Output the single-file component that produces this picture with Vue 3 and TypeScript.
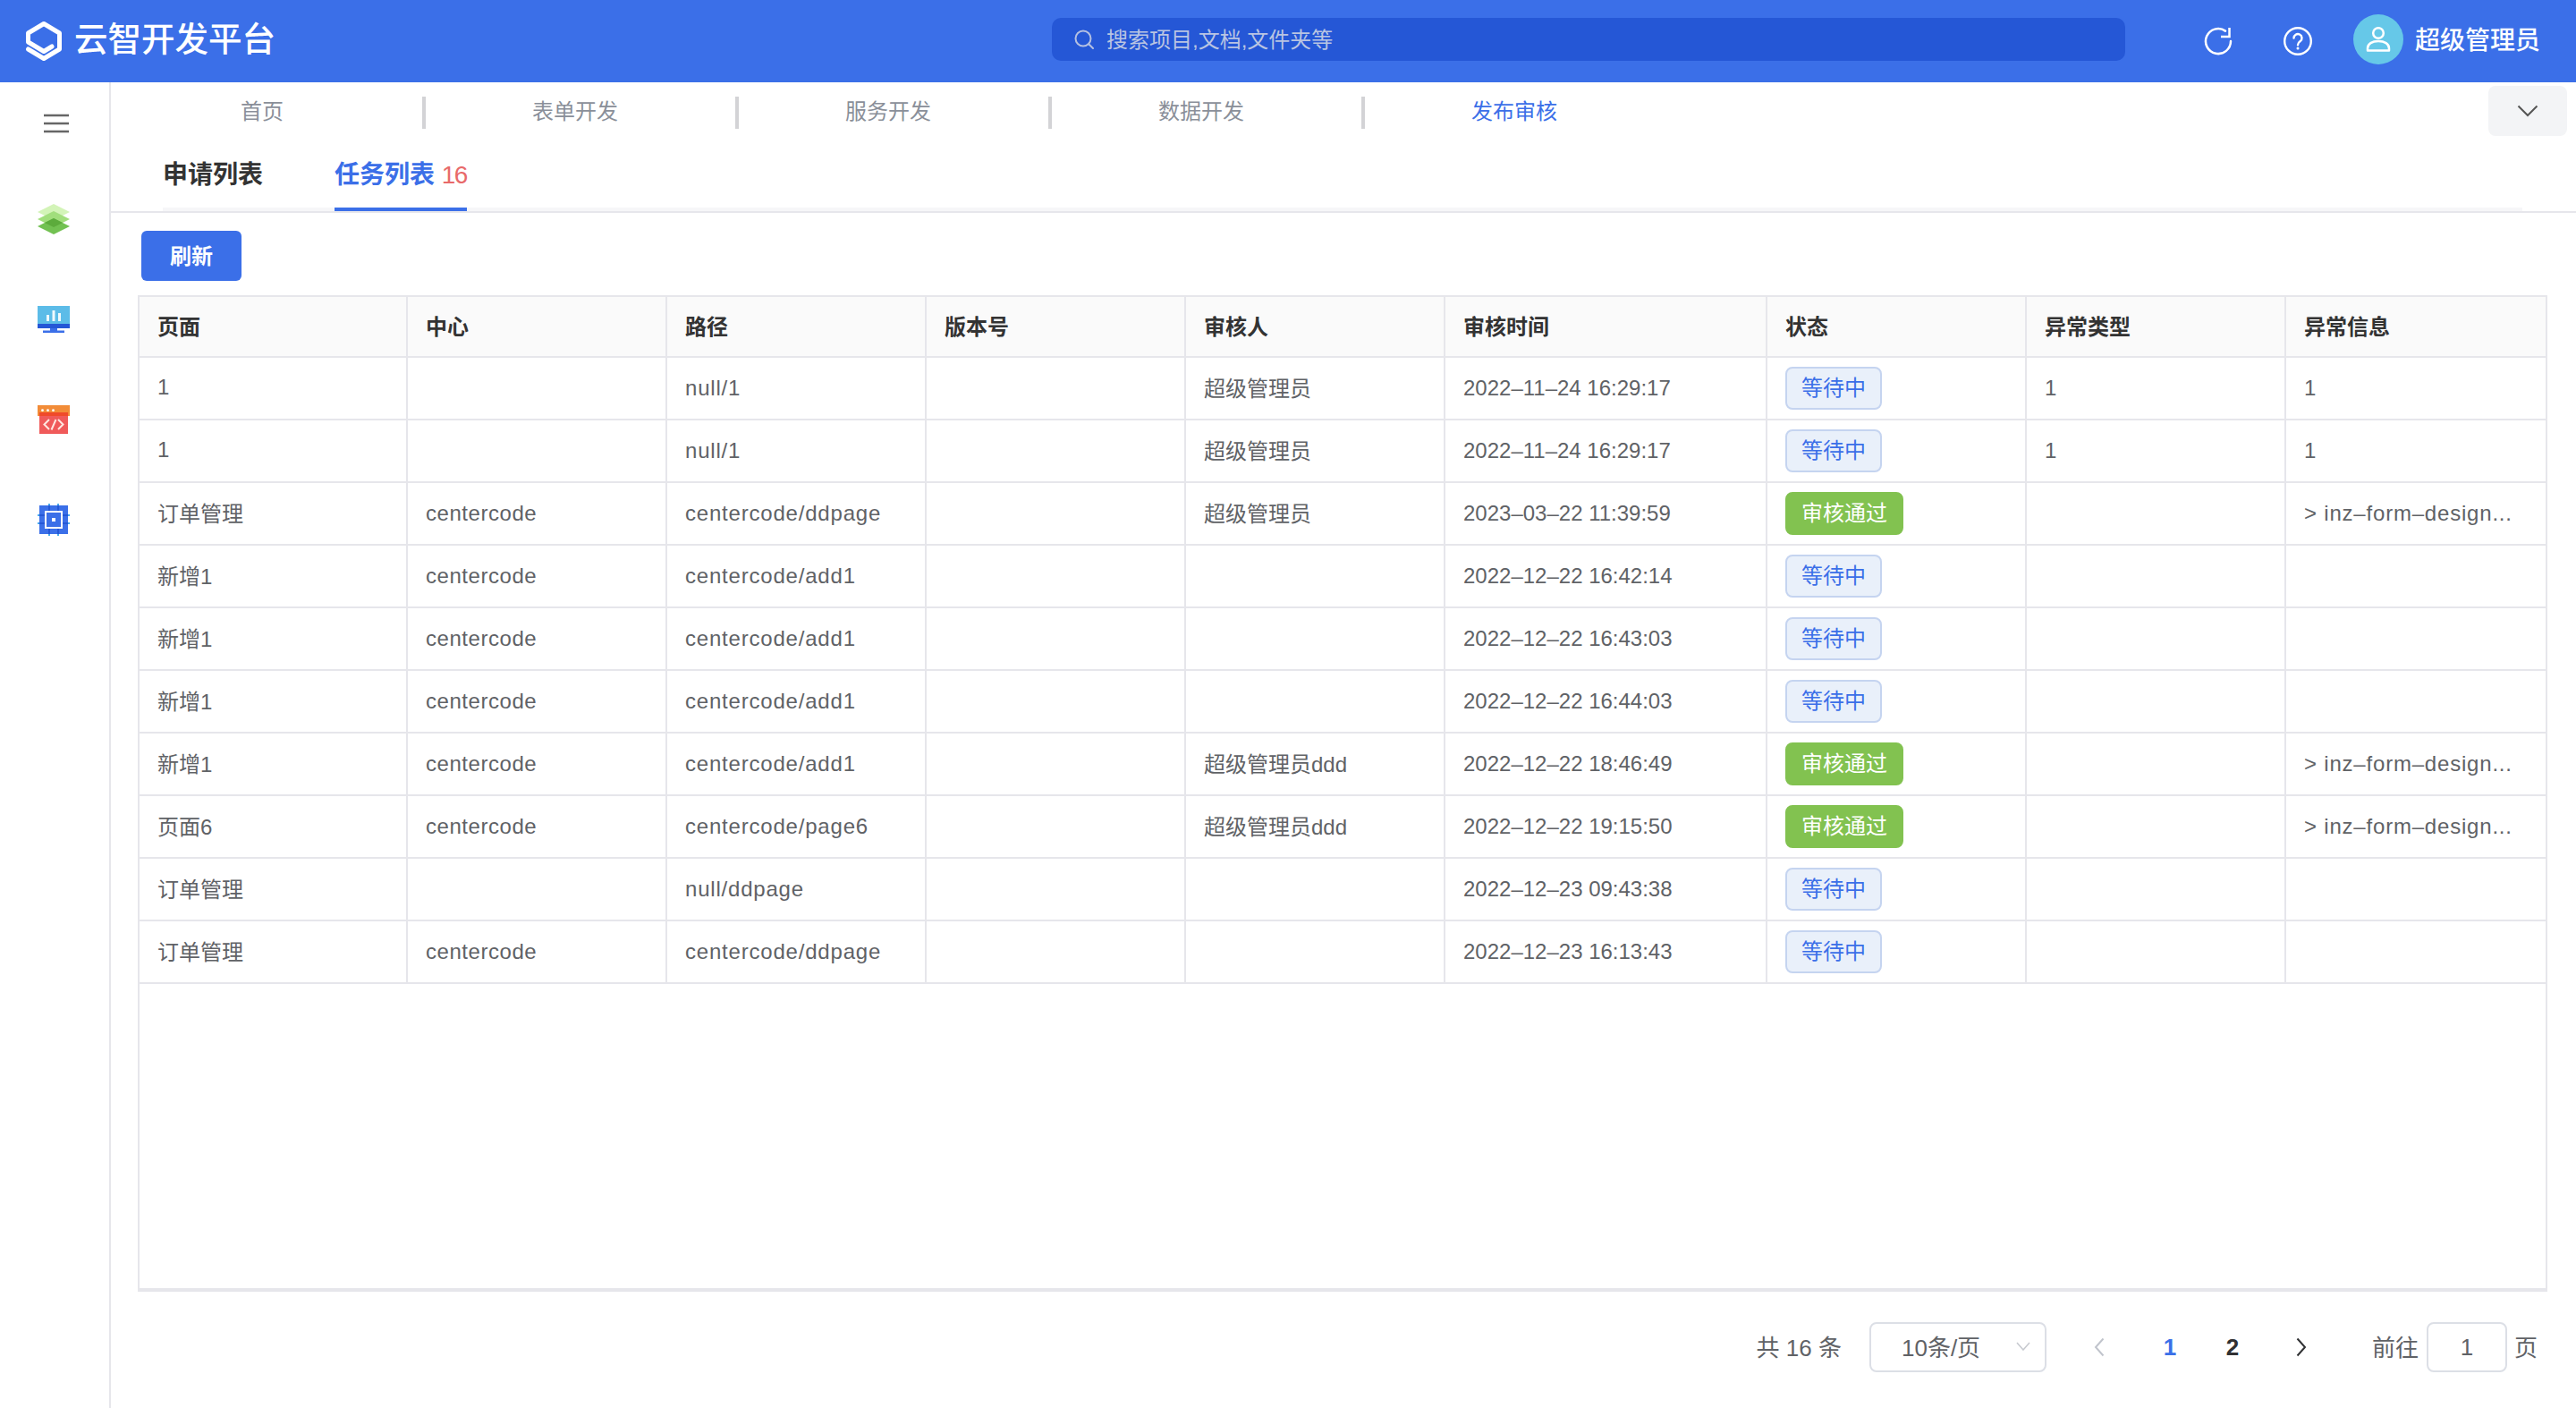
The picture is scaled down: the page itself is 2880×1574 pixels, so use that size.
<script setup lang="ts">
interface Row {
  page: string
  center: string
  path: string
  version: string
  reviewer: string
  time: string
  passed: boolean
  errType: string
  errInfo: string
}

const navItems = ['首页', '表单开发', '服务开发', '数据开发', '发布审核']
const columns = ['页面', '中心', '路径', '版本号', '审核人', '审核时间', '状态', '异常类型', '异常信息']
const errText = '> inz–form–design...'

const rows: Row[] = [
  { page: '1', center: '', path: 'null/1', version: '', reviewer: '超级管理员', time: '2022–11–24 16:29:17', passed: false, errType: '1', errInfo: '1' },
  { page: '1', center: '', path: 'null/1', version: '', reviewer: '超级管理员', time: '2022–11–24 16:29:17', passed: false, errType: '1', errInfo: '1' },
  { page: '订单管理', center: 'centercode', path: 'centercode/ddpage', version: '', reviewer: '超级管理员', time: '2023–03–22 11:39:59', passed: true, errType: '', errInfo: errText },
  { page: '新增1', center: 'centercode', path: 'centercode/add1', version: '', reviewer: '', time: '2022–12–22 16:42:14', passed: false, errType: '', errInfo: '' },
  { page: '新增1', center: 'centercode', path: 'centercode/add1', version: '', reviewer: '', time: '2022–12–22 16:43:03', passed: false, errType: '', errInfo: '' },
  { page: '新增1', center: 'centercode', path: 'centercode/add1', version: '', reviewer: '', time: '2022–12–22 16:44:03', passed: false, errType: '', errInfo: '' },
  { page: '新增1', center: 'centercode', path: 'centercode/add1', version: '', reviewer: '超级管理员ddd', time: '2022–12–22 18:46:49', passed: true, errType: '', errInfo: errText },
  { page: '页面6', center: 'centercode', path: 'centercode/page6', version: '', reviewer: '超级管理员ddd', time: '2022–12–22 19:15:50', passed: true, errType: '', errInfo: errText },
  { page: '订单管理', center: '', path: 'null/ddpage', version: '', reviewer: '', time: '2022–12–23 09:43:38', passed: false, errType: '', errInfo: '' },
  { page: '订单管理', center: 'centercode', path: 'centercode/ddpage', version: '', reviewer: '', time: '2022–12–23 16:13:43', passed: false, errType: '', errInfo: '' },
]
</script>

<template>
  <div class="app">
    <header class="topbar">
      <div class="brand">
        <svg class="brand-logo" width="40" height="44" viewBox="0 0 40 44" fill="none">
          <path d="M2.5 31 L20 41.5 L37.5 31 V13 L20 2.5 L2.5 13 V23 L20 33.5 L29 28" stroke="#fff" stroke-width="5" stroke-linecap="round" stroke-linejoin="round"/>
        </svg>
        <span class="brand-name">云智开发平台</span>
      </div>
      <div class="search">
        <svg width="22" height="22" viewBox="0 0 22 22" fill="none">
          <circle cx="10" cy="10" r="8.5" stroke="#b4c0e2" stroke-width="2"/>
          <path d="M16.5 16.5 L21 21" stroke="#b4c0e2" stroke-width="2" stroke-linecap="round"/>
        </svg>
        <span class="search-text">搜索项目,文档,文件夹等</span>
      </div>
      <div class="top-actions">
        <svg width="32" height="32" viewBox="0 0 32 32" fill="none">
          <path d="M24 4.6 A14 14 0 1 0 30 16" stroke="#fff" stroke-width="2.5" stroke-linecap="round"/>
          <path d="M28.5 1 V11 H19" stroke="#fff" stroke-width="2.5"/>
        </svg>
        <svg class="help" width="32" height="32" viewBox="0 0 32 32" fill="none">
          <circle cx="16" cy="16" r="14.8" stroke="#fff" stroke-width="2.4"/>
          <path d="M11.5 12.5 a4.5 4.5 0 1 1 7.2 3.6 c-1.7 1.2 -2.7 2.2 -2.7 4.2" stroke="#fff" stroke-width="2.4" stroke-linecap="round"/>
          <circle cx="16" cy="24" r="1.5" fill="#fff"/>
        </svg>
        <div class="avatar">
          <svg width="28" height="28" viewBox="0 0 28 28" fill="none">
            <circle cx="14" cy="7" r="5.8" stroke="#fff" stroke-width="2.5"/>
            <path d="M2 26.5 V24 C2 19 7 16 14 16 S26 19 26 24 V26.5 Z" stroke="#fff" stroke-width="2.5" stroke-linejoin="round"/>
          </svg>
        </div>
        <span class="user-name">超级管理员</span>
      </div>
    </header>

    <div class="body">
      <aside class="sidebar">
        <button class="menu-btn">
          <svg width="28" height="22" viewBox="0 0 28 22" fill="none">
            <path d="M0 2 H28 M0 11 H28 M0 20 H28" stroke="#666" stroke-width="2.4"/>
          </svg>
        </button>
        <div class="side-item">
          <svg width="36" height="34" viewBox="0 0 36 34">
            <polygon points="18,0 36,9 18,18 0,9" fill="#d3f4b8"/>
            <polygon points="18,8 36,17 18,26 0,17" fill="#a1de7c"/>
            <polygon points="18,16 36,25 18,34 0,25" fill="#72c152"/>
            <polygon points="18,16 28,21 18,26 8,21" fill="#5cab3c"/>
          </svg>
        </div>
        <div class="side-item">
          <svg width="36" height="30" viewBox="0 0 36 30">
            <rect x="0" y="0" width="36" height="20" fill="#5cbce8"/>
            <rect x="0" y="20" width="36" height="5" fill="#2557d6"/>
            <rect x="14" y="25" width="8" height="3" fill="#3b6fe8"/>
            <rect x="6" y="27.5" width="24" height="2.5" fill="#3b6fe8"/>
            <rect x="10" y="10" width="3" height="7" fill="#fff" opacity=".9"/>
            <rect x="16.5" y="5" width="3" height="12" fill="#fff" opacity=".9"/>
            <rect x="23" y="8" width="3" height="9" fill="#fff" opacity=".9"/>
          </svg>
        </div>
        <div class="side-item">
          <svg width="36" height="32" viewBox="0 0 36 32" fill="none">
            <rect x="0" y="0" width="36" height="12" fill="#f28c38"/>
            <rect x="2" y="8" width="32" height="24" fill="#f05a5a"/>
            <rect x="2" y="8" width="32" height="4" fill="#f04a2a"/>
            <circle cx="5.5" cy="5.7" r="1.4" fill="#fff"/>
            <circle cx="11.5" cy="5.7" r="1.4" fill="#fff"/>
            <circle cx="17.5" cy="5.7" r="1.4" fill="#fff"/>
            <path d="M13 16 L7.5 21.5 L13 27 M23 16 L28.5 21.5 L23 27 M20.5 16 L15.5 27.5" stroke="#ffe6e0" stroke-width="2"/>
          </svg>
        </div>
        <div class="side-item">
          <svg width="36" height="36" viewBox="0 0 36 36" fill="none">
            <path d="M13 0 V36 M23 0 V36 M0 13 H36 M0 22 H36" stroke="#47a9ef" stroke-width="2"/>
            <rect x="2" y="2" width="32" height="32" fill="#3b6fe8"/>
            <path d="M13 2 V8 M23 2 V8 M13 28 V34 M23 28 V34 M2 13 H8 M2 22 H8 M28 13 H34 M28 22 H34" stroke="#2557d6" stroke-width="2"/>
            <rect x="9" y="9" width="18" height="18" stroke="#fff" stroke-width="2"/>
            <rect x="16" y="16" width="4" height="4" fill="#fff"/>
          </svg>
        </div>
      </aside>

      <main class="content">
        <div class="nav-row">
          <div class="nav-items">
            <span
              v-for="(item, i) in navItems"
              :key="item"
              class="nav-item"
              :class="{ active: i === navItems.length - 1, last: i === navItems.length - 1 }"
            >{{ item }}</span>
          </div>
          <button class="nav-more">
            <svg width="24" height="14" viewBox="0 0 24 14" fill="none">
              <path d="M1.5 1.5 L12 12 L22.5 1.5" stroke="#555" stroke-width="2"/>
            </svg>
          </button>
        </div>

        <div class="subtabs-line">
          <div class="subtabs">
            <div class="subtab">申请列表</div>
            <div class="subtab current">任务列表 <span class="count">16</span></div>
          </div>
        </div>

        <div class="panel">
          <button class="refresh"><span>刷新</span></button>

          <div class="table-wrap">
            <table class="grid">
              <colgroup>
                <col v-for="(c, i) in columns" :key="c" :class="'col-' + i" />
              </colgroup>
              <thead>
                <tr>
                  <th v-for="c in columns" :key="c">{{ c }}</th>
                </tr>
              </thead>
              <tbody>
                <tr v-for="(r, i) in rows" :key="i">
                  <td class="cjk">{{ r.page }}</td>
                  <td class="latin">{{ r.center }}</td>
                  <td class="latin wide">{{ r.path }}</td>
                  <td>{{ r.version }}</td>
                  <td class="cjk">{{ r.reviewer }}</td>
                  <td>{{ r.time }}</td>
                  <td>
                    <span class="tag" :class="r.passed ? 'tag-ok' : 'tag-wait'">{{ r.passed ? '审核通过' : '等待中' }}</span>
                  </td>
                  <td>{{ r.errType }}</td>
                  <td class="latin wide">{{ r.errInfo }}</td>
                </tr>
              </tbody>
            </table>
          </div>

          <div class="pager">
            <span class="total">共 16 条</span>
            <div class="size-select">
              <span>10条/页</span>
              <svg width="16" height="10" viewBox="0 0 16 10" fill="none">
                <path d="M1 1 L8 9 L15 1" stroke="#c6c9cf" stroke-width="1.5"/>
              </svg>
            </div>
            <button class="page-btn prev">
              <svg width="12" height="22" viewBox="0 0 12 22" fill="none">
                <path d="M10.5 1.5 L2 11 L10.5 20.5" stroke="#c0c4cc" stroke-width="2"/>
              </svg>
            </button>
            <button class="page-btn num on">1</button>
            <button class="page-btn num">2</button>
            <button class="page-btn next">
              <svg width="12" height="22" viewBox="0 0 12 22" fill="none">
                <path d="M1.5 1.5 L10 11 L1.5 20.5" stroke="#303133" stroke-width="2"/>
              </svg>
            </button>
            <span class="goto">前往</span>
            <div class="goto-input">1</div>
            <span class="goto-end">页</span>
          </div>
        </div>
      </main>
    </div>
  </div>
</template>

<style>
html,
body {
  margin: 0;
  background: #fff;
}
</style>

<style scoped>
.app {
  width: 2880px;
  height: 1574px;
  display: flex;
  flex-direction: column;
  overflow: hidden;
  background: #fff;
  font-family: 'Liberation Sans', 'Noto Sans CJK SC', sans-serif;
  font-size: 24px;
  color: #606266;
}

button {
  border: none;
  padding: 0;
  font: inherit;
  background: none;
}

/* ---- Top bar ---- */
.topbar {
  flex: 0 0 92px;
  display: flex;
  align-items: center;
  padding: 0 40px 0 29px;
  background: #3b6fe8;
  color: #fff;
}

.brand {
  flex: 0 0 1147px;
  display: flex;
  align-items: center;
}

.brand-logo {
  flex-shrink: 0;
}

.brand-name {
  margin-left: 14px;
  padding-bottom: 2px;
  font-size: 37.5px;
  font-weight: 500;
  line-height: 1;
}

.search {
  flex: 0 0 1200px;
  height: 48px;
  display: flex;
  align-items: center;
  gap: 14px;
  box-sizing: border-box;
  padding-left: 25px;
  margin-top: -4px;
  border-radius: 10px;
  background: #2557d6;
  color: #b9c4e2;
  font-size: 24px;
}

.search-text {
  padding-bottom: 3px;
}

.top-actions {
  margin-left: auto;
  display: flex;
  align-items: center;
}

.help {
  margin-left: 57px;
}

.avatar {
  width: 56px;
  height: 56px;
  margin-left: 46px;
  margin-top: -4px;
  border-radius: 50%;
  display: flex;
  align-items: center;
  justify-content: center;
  background: #66c8e8;
}

.user-name {
  margin-left: 13px;
  padding-bottom: 7px;
  font-size: 28px;
  font-weight: 500;
  white-space: nowrap;
}

/* ---- Sidebar ---- */
.body {
  flex: 1;
  display: flex;
  min-height: 0;
}

.sidebar {
  flex: 0 0 124px;
  box-sizing: border-box;
  display: flex;
  flex-direction: column;
  align-items: center;
  padding-top: 35px;
  padding-right: 2px;
  border-right: 2px solid #e6e6eb;
}

.menu-btn {
  height: 22px;
  margin-bottom: 40px;
  margin-left: 6px;
}

.side-item {
  height: 112px;
  display: flex;
  align-items: center;
  justify-content: center;
}

/* ---- Content ---- */
.content {
  flex: 1;
  min-width: 0;
  display: flex;
  flex-direction: column;
}

.nav-row {
  height: 58px;
  display: flex;
  padding-right: 10px;
}

.nav-items {
  display: flex;
  padding-top: 16px;
  margin-left: 2px;
}

.nav-item {
  width: 350px;
  height: 36px;
  line-height: 33px;
  padding-right: 12px;
  text-align: center;
  color: #8a8f99;
  border-right: 4px solid #d3d3d6;
  box-sizing: border-box;
}

.nav-item.last {
  border-right: none;
  padding-right: 16px;
}

.nav-item.active {
  color: #3b6fe8;
}

.nav-more {
  margin-left: auto;
  margin-top: 4px;
  width: 88px;
  height: 56px;
  border-radius: 8px;
  background: #f3f4f6;
  display: flex;
  align-items: center;
  justify-content: center;
}

.subtabs-line {
  border-bottom: 2px solid #e6e6eb;
  padding-left: 58px;
  padding-right: 60px;
}

.subtabs {
  display: flex;
  gap: 80px;
  height: 82px;
  border-bottom: 4px solid #f6f6f8;
}

.subtab {
  height: 82px;
  box-sizing: content-box;
  line-height: 92px;
  font-size: 28px;
  font-weight: 700;
  color: #333;
}

.subtab.current {
  color: #3b6fe8;
  border-bottom: 4px solid #3b6fe8;
}

.count {
  color: #e86a6a;
  font-weight: 400;
  letter-spacing: -1.5px;
}

.panel {
  padding: 20px 32px 0 30px;
}

.refresh {
  display: block;
  width: 112px;
  height: 56px;
  margin-left: 4px;
  padding-bottom: 4px;
  border-radius: 6px;
  background: #3b6fe8;
  color: #fff;
  font-weight: 700;
}

.table-wrap {
  margin-top: 16px;
  height: 1114px;
  box-sizing: border-box;
  border: 2px solid #e6e6eb;
  border-bottom-width: 4px;
}

.grid {
  width: 2690px;
  table-layout: fixed;
  border-collapse: separate;
  border-spacing: 0;
}

.col-0 {
  width: 300px;
}
.col-1,
.col-2,
.col-3,
.col-4,
.col-6,
.col-7,
.col-8 {
  width: 290px;
}
.col-5 {
  width: 360px;
}

.grid th,
.grid td {
  box-sizing: border-box;
  padding: 0 0 0 20px;
  text-align: left;
  white-space: nowrap;
  border-right: 2px solid #e6e6eb;
  border-bottom: 2px solid #e6e6eb;
}

.grid th:last-child,
.grid td:last-child {
  border-right: none;
}

.grid th {
  height: 68px;
  padding-bottom: 4px;
  font-weight: 700;
  color: #333;
  background: #fafafa;
}

.grid td {
  height: 70px;
}

.grid td.cjk {
  padding-bottom: 3px;
}

.grid td.latin {
  letter-spacing: 0.55px;
}

.grid td.latin.wide {
  letter-spacing: 0.8px;
}

.tag {
  display: inline-block;
  box-sizing: border-box;
  height: 48px;
  line-height: 44px;
  padding: 0 16px;
  border-radius: 8px;
  vertical-align: middle;
}

.tag-wait {
  border: 2px solid #c5d4f0;
  background: #e9f0fa;
  color: #3b6fe8;
}

.tag-ok {
  border: 2px solid #82c250;
  background: #82c250;
  color: #fff;
}

/* ---- Pagination ---- */
.pager {
  margin-top: 34px;
  height: 56px;
  display: flex;
  align-items: center;
  justify-content: flex-end;
  padding-right: 11px;
  font-size: 26px;
}

.total,
.goto,
.goto-end {
  padding-bottom: 3px;
}

.size-select {
  width: 198px;
  height: 56px;
  margin-left: 31px;
  box-sizing: border-box;
  display: flex;
  align-items: center;
  justify-content: space-between;
  padding: 0 16px 3px 34px;
  border: 2px solid #dcdfe6;
  border-radius: 8px;
}

.page-btn {
  width: 70px;
  height: 56px;
  display: flex;
  align-items: center;
  justify-content: center;
  font-size: 26px;
}

.prev {
  margin-left: 24px;
  margin-right: 9px;
}

.next {
  margin-left: 7px;
}

.num {
  font-weight: 700;
  color: #303133;
}

.num.on {
  color: #3b6fe8;
}

.goto {
  margin-left: 44px;
}

.goto-input {
  width: 90px;
  height: 56px;
  margin-left: 9px;
  box-sizing: border-box;
  line-height: 52px;
  text-align: center;
  border: 2px solid #dcdfe6;
  border-radius: 8px;
}

.goto-end {
  margin-left: 8px;
}
</style>
